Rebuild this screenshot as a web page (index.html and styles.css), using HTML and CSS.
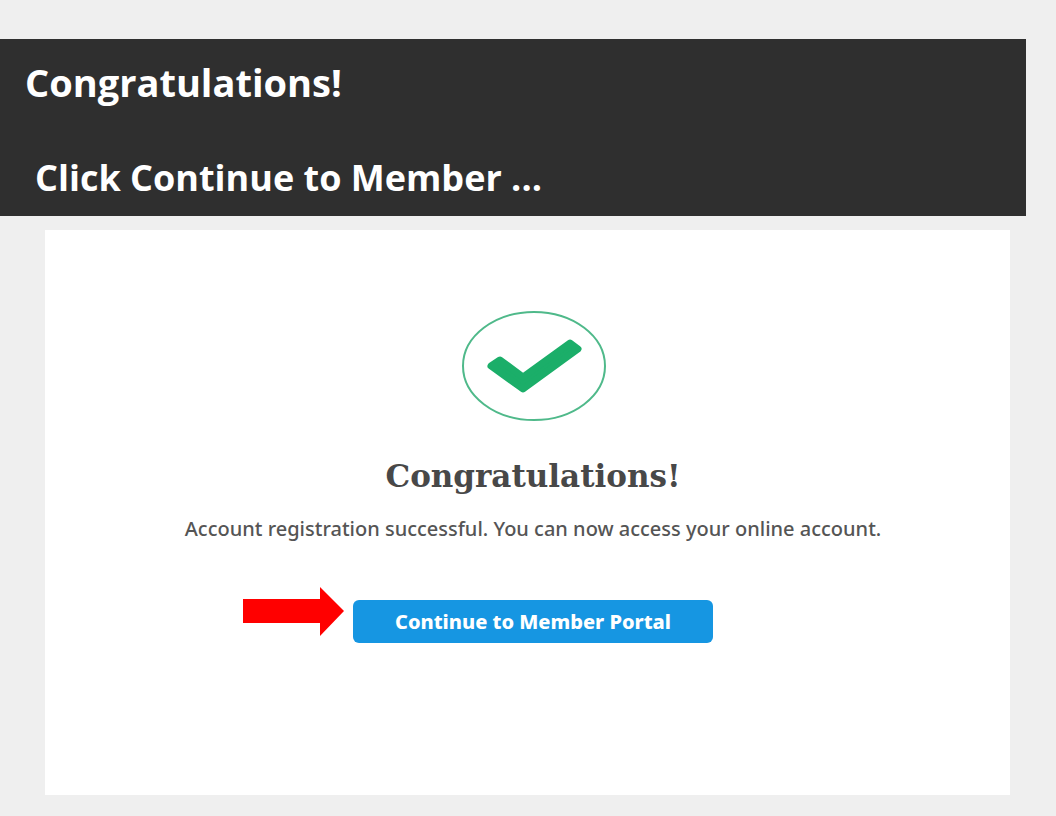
FILE: index.html
```html
<!DOCTYPE html>
<html lang="en">
<head>
    <meta charset="UTF-8">
    <meta name="viewport" content="width=device-width, initial-scale=1.0">
    <title>Congratulations!</title>
    <link rel="stylesheet" href="styles.css">
</head>
<body>
    <header class="banner">
        <h1>Congratulations!</h1>
        <p class="step">Click Continue to Member ...</p>
    </header>

    <main class="card">
        <svg class="check" viewBox="0 0 146 112" aria-hidden="true">
            <ellipse cx="74" cy="56" rx="71" ry="54" fill="none" stroke="#4fb98a" stroke-width="2"/>
            <path d="M31 56 L40 50 L63 67 L110 33 L118 39 L63 79 Z" fill="#1bae69" stroke="#1bae69" stroke-width="7" stroke-linejoin="round"/>
        </svg>
        <h2>Congratulations!</h2>
        <p class="message">Account registration successful. You can now access your online account.</p>
        <div class="actions">
            <svg class="arrow" viewBox="0 0 101 49" aria-hidden="true">
                <path d="M0 12 H77 V0 L101 24 L77 49 V36 H0 Z" fill="#ff0000"/>
            </svg>
            <button type="button">Continue to Member Portal</button>
        </div>
    </main>
</body>
</html>
```
FILE: styles.css
```css
* {
    box-sizing: border-box;
}
body {
    margin: 0;
    padding: 39px 0 21px;
    background-color: #efefef;
    font-family: "Noto Sans", sans-serif;
    color: #555;
}
h1, h2, p {
    margin: 0;
}
.banner {
    margin-right: 30px;
    padding: 19px 25px 14px;
    background-color: #2f2f2f;
    color: #fff;
}
h1, .step {
    font-family: "Open Sans", sans-serif;
    font-size: 38px;
    font-weight: bold;
    line-height: 48px;
}
.step {
    margin-top: 48px;
    padding-left: 10px;
    font-size: 36px;
}
.card {
    display: flex;
    flex-direction: column;
    align-items: center;
    margin: 14px 46px 0 45px;
    padding: 80px 0 152px 11px;
    background-color: #fff;
}
.check {
    width: 146px;
    height: 112px;
}
h2 {
    margin-top: 34px;
    font-family: "DejaVu Serif", serif;
    font-size: 31px;
    line-height: 40px;
    color: #484848;
}
.message {
    margin-top: 19px;
    font-size: 20px;
    font-weight: 500;
    line-height: 28px;
}
.actions {
    display: grid;
    grid-template-columns: 1fr 360px 1fr;
    column-gap: 9px;
    width: 100%;
    margin-top: 44px;
}
.arrow {
    width: 101px;
    height: 49px;
    justify-self: end;
}
button {
    height: 43px;
    margin-top: 13px;
    border: none;
    border-radius: 6px;
    background-color: #1696e2;
    font-family: "Noto Sans", sans-serif;
    font-size: 20px;
    font-weight: 800;
    color: #fff;
    cursor: pointer;
}
```
